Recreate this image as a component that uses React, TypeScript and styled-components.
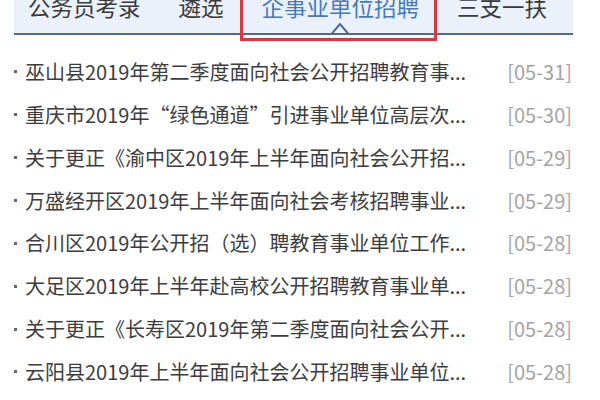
import React from "react";
import styled, { createGlobalStyle } from "styled-components";

const GlobalStyle = createGlobalStyle`
    html, body {
        margin: 0;
        padding: 0;
        background: #ffffff;
        overflow: hidden;
    }
    body {
        font-family: "Noto Sans CJK SC", "Noto Sans", sans-serif;
    }
`;

type NewsItem = {
    title: string;
    date: string;
};

const tabs = ["公务员考录", "遴选", "企事业单位招聘", "三支一扶"];
const activeTab = 2;

const news: NewsItem[] = [
    { title: "巫山县2019年第二季度面向社会公开招聘教育事...", date: "05-31" },
    { title: "重庆市2019年“绿色通道”引进事业单位高层次...", date: "05-30" },
    { title: "关于更正《渝中区2019年上半年面向社会公开招...", date: "05-29" },
    { title: "万盛经开区2019年上半年面向社会考核招聘事业...", date: "05-29" },
    { title: "合川区2019年公开招（选）聘教育事业单位工作...", date: "05-28" },
    { title: "大足区2019年上半年赴高校公开招聘教育事业单...", date: "05-28" },
    { title: "关于更正《长寿区2019年第二季度面向社会公开...", date: "05-28" },
    { title: "云阳县2019年上半年面向社会公开招聘事业单位...", date: "05-28" },
];

export default function App() {
    return (
        <>
            <GlobalStyle />
            <Style_panel>
                <Style_tabs>
                    {tabs.map((tab, i) => (
                        <Style_tab key={tab} $active={i === activeTab}>
                            {tab}
                            {i === activeTab && (
                                <Style_caret viewBox="0 0 18 11" width="18" height="11">
                                    <polyline
                                        points="1,10.5 9,1 17,10.5"
                                        fill="none"
                                        stroke="#4c6a92"
                                        strokeWidth="2"
                                    />
                                </Style_caret>
                            )}
                        </Style_tab>
                    ))}
                </Style_tabs>

                <Style_list>
                    {news.map((item) => (
                        <Style_row key={item.title}>
                            <Style_title>{item.title}</Style_title>
                            <Style_date>[{item.date}]</Style_date>
                        </Style_row>
                    ))}
                </Style_list>
            </Style_panel>
        </>
    );
}

const Style_panel = styled.div`
    width: 559px;
    margin-left: 14px;
`;

const Style_tabs = styled.div`
    display: flex;
    align-items: flex-end;
    height: 33px;
    padding-left: 14px;
    gap: 38px;
    background: #eaf1fa;
    border-bottom: 2px solid #4c6a92;
`;

const Style_tab = styled.div<{ $active?: boolean }>`
    position: relative;
    font-size: 22.5px;
    line-height: 22px;
    padding-bottom: 16px;
    white-space: nowrap;
    color: ${({ $active }) => ($active ? "#4a79b8" : "#3a3a3a")};

    ${({ $active }) =>
        $active &&
        `
        &::after {
            content: "";
            position: absolute;
            left: -22px;
            right: -18px;
            top: -20px;
            bottom: -8px;
            border: 3px solid #d8383f;
            pointer-events: none;
        }
    `}
`;

const Style_caret = styled.svg`
    position: absolute;
    left: 50%;
    bottom: -1px;
    transform: translateX(-50%);
`;

const Style_list = styled.ul`
    list-style: none;
    margin: 0;
    padding: 15px 0 0;
`;

const Style_row = styled.li`
    display: flex;
    justify-content: space-between;
    align-items: center;
    height: 42.86px;
    font-size: 20px;
`;

const Style_title = styled.span`
    display: flex;
    align-items: center;
    color: #3d3d3d;
    white-space: nowrap;

    &::before {
        content: "";
        width: 3px;
        height: 3px;
        margin: 1px 8px 0 0;
        background: #666666;
    }
`;

const Style_date = styled.span`
    color: #a3a3a3;
    margin-right: 1px;
`;
